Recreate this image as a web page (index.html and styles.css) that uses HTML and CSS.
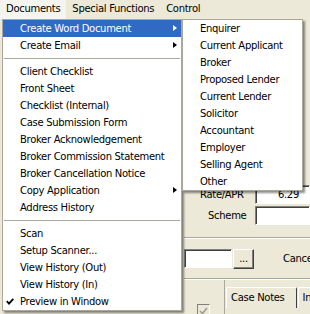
FILE: index.html
```html
<!DOCTYPE html>
<html>
<head>
  <title>Documents menu</title>
  <link rel="stylesheet" href="styles.css">
</head>
<body>
  <div class="menubar">
    <span class="top open">Documents</span>
    <span class="top">Special Functions</span>
    <span class="top">Control</span>
  </div>

  <div class="form">
    <div class="row">
      <span class="label rate">Rate/APR</span>
      <span class="box num">6.29</span>
    </div>
    <div class="row">
      <span class="label scheme">Scheme</span>
      <span class="box"></span>
    </div>
    <div class="groove"></div>
    <div class="row lookup">
      <span class="box short"></span>
      <span class="btn">...</span>
      <span class="label cancel">Cance</span>
    </div>
    <div class="groove low"></div>
    <div class="tabarea">
      <div class="checkcol">
        <span class="check">
          <svg width="9" height="8" viewBox="0 0 9 8"><polyline points="1,4 3.5,6.5 8,1" fill="none" stroke="#9d9a8e" stroke-width="1.6"/></svg>
        </span>
      </div>
      <div class="tabs">
        <span class="tab">Case Notes</span>
        <span class="tab cut">In</span>
      </div>
    </div>
  </div>

  <ul class="menu main">
    <li class="item hot">Create Word Document<i class="arrow"></i></li>
    <li class="item">Create Email<i class="arrow"></i></li>
    <li class="sep"></li>
    <li class="item">Client Checklist</li>
    <li class="item">Front Sheet</li>
    <li class="item">Checklist (Internal)</li>
    <li class="item">Case Submission Form</li>
    <li class="item">Broker Acknowledgement</li>
    <li class="item">Broker Commission Statement</li>
    <li class="item">Broker Cancellation Notice</li>
    <li class="item">Copy Application<i class="arrow"></i></li>
    <li class="item">Address History</li>
    <li class="sep"></li>
    <li class="item">Scan</li>
    <li class="item">Setup Scanner...</li>
    <li class="item">View History (Out)</li>
    <li class="item">View History (In)</li>
    <li class="item">
      <svg class="tick" width="8" height="7" viewBox="0 0 8 7"><polyline points="0.8,3.2 3,5.6 7.3,0.8" fill="none" stroke="#000" stroke-width="1.8"/></svg>
      Preview in Window
    </li>
  </ul>

  <ul class="menu sub">
    <li class="item">Enquirer</li>
    <li class="item">Current Applicant</li>
    <li class="item">Broker</li>
    <li class="item">Proposed Lender</li>
    <li class="item">Current Lender</li>
    <li class="item">Solicitor</li>
    <li class="item">Accountant</li>
    <li class="item">Employer</li>
    <li class="item">Selling Agent</li>
    <li class="item">Other</li>
  </ul>
</body>
</html>
```

FILE: styles.css
```css
body {
  margin: 0;
  width: 310px;
  height: 314px;
  overflow: hidden;
  position: relative;
  background-color: #ece9d8;
  font-family: Tahoma, "DejaVu Sans", sans-serif;
  font-size: 10px;
  letter-spacing: -0.3px;
  color: #000;
}

/* top menu bar */
.menubar {
  display: flex;
  height: 19px;
  background-color: #ece9d8;
}
.top {
  padding: 0 6px;
  line-height: 17px;
}
.top.open {
  background-color: #f5f4ef;
}

/* form behind the menus */
.form {
  padding: 165px 0 0 184px;
}
.row {
  display: flex;
  align-items: center;
  height: 21px;
}
.label {
  line-height: 19px;
  white-space: nowrap;
}
.rate,
.scheme {
  width: 71px;
  padding-left: 16px;
  box-sizing: border-box;
  flex: none;
}
.scheme {
  padding-left: 24px;
}
.box {
  flex: 1;
  height: 19px;
  box-sizing: border-box;
  background-color: #fff;
  border-top: 1px solid #808080;
  border-left: 1px solid #808080;
  border-right: 1px solid #fff;
  border-bottom: 1px solid #fff;
  box-shadow: inset 1px 1px 0 #404040;
  text-align: right;
  padding-right: 10px;
  line-height: 17px;
}
.groove {
  height: 0;
  margin: 11px 0 9px 0;
  border-top: 1px solid #aca899;
  border-bottom: 1px solid #fff;
}
.lookup .box.short {
  flex: none;
  width: 48px;
}
.btn {
  flex: none;
  width: 21px;
  height: 20px;
  box-sizing: border-box;
  margin-left: 1px;
  border-top: 1px solid #fff;
  border-left: 1px solid #fff;
  border-right: 1px solid #404040;
  border-bottom: 1px solid #404040;
  box-shadow: inset -1px -1px 0 #808080;
  text-align: center;
  line-height: 18px;
}
.cancel {
  margin-left: 29px;
}
.groove.low {
  margin: 9px 0 0 0;
}
.tabarea {
  display: flex;
  height: 40px;
  overflow: hidden;
}
.checkcol {
  flex: none;
  width: 41px;
  border-right: 1px solid #aca899;
  display: flex;
  align-items: flex-end;
  padding-left: 13px;
  box-sizing: border-box;
}
.check {
  display: flex;
  align-items: center;
  justify-content: center;
  width: 13px;
  height: 13px;
  margin-bottom: 3px;
  box-sizing: border-box;
  border-top: 1px solid #808080;
  border-left: 1px solid #808080;
  border-right: 1px solid #fff;
  border-bottom: 1px solid #fff;
  background-color: #ece9d8;
}
.tabs {
  display: flex;
  padding: 7px 0 0 1px;
  align-items: flex-start;
}
.tab {
  flex: none;
  white-space: nowrap;
  height: 20px;
  line-height: 20px;
  padding: 0 11px 0 4px;
  border-top: 1px solid #fff;
  border-left: 1px solid #fff;
  border-right: 1px solid #404040;
  border-radius: 2px 2px 0 0;
}
.tab.cut {
  margin-left: 1px;
  padding: 0 4px;
}

/* drop-down menus */
.menu {
  position: absolute;
  margin: 0;
  padding: 0;
  list-style: none;
  background-color: #fff;
  border: 1px solid #aca899;
  box-sizing: border-box;
  box-shadow: 2px 2px 2px rgba(0, 0, 0, 0.45);
}
.menu.main {
  left: 2px;
  top: 19px;
  width: 180px;
}
.menu.sub {
  left: 182px;
  top: 19px;
  width: 121px;
}
.item {
  position: relative;
  height: 17px;
  line-height: 17px;
  padding-left: 17px;
  white-space: nowrap;
}
.item.hot {
  background-color: #316ac5;
  color: #fff;
}
.sep {
  height: 9px;
  box-sizing: border-box;
  border-bottom: 4px solid #fff;
  border-top: 4px solid #fff;
  background-color: #aca899;
  margin: 0 1px;
}
.arrow {
  position: absolute;
  right: 4px;
  top: 5px;
  width: 0;
  height: 0;
  border-left: 4px solid #000;
  border-top: 3.5px solid transparent;
  border-bottom: 3.5px solid transparent;
}
.hot .arrow {
  border-left-color: #fff;
}
.tick {
  position: absolute;
  left: 3px;
  top: 5px;
}
```
